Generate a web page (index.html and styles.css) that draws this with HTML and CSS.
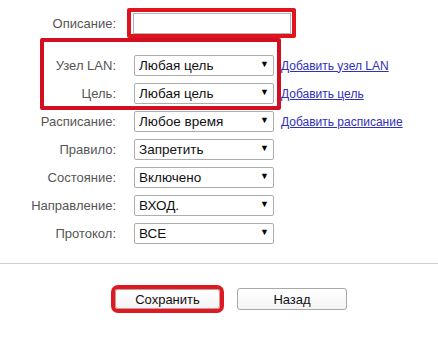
FILE: index.html
```html
<!DOCTYPE html>
<html lang="ru">
<head>
  <meta charset="UTF-8">
  <title>Правило доступа</title>
  <link rel="stylesheet" href="styles.css">
</head>
<body>
  <div class="page">
    <form class="rule-form">
      <div class="row row-desc">
        <label class="row-label" for="desc">Описание:</label>
        <input class="text-input" id="desc" type="text">
      </div>

      <div class="row">
        <label class="row-label">Узел LAN:</label>
        <span class="select-wrap"><select class="select"><option>Любая цель</option></select></span>
        <a class="row-link" href="#">Добавить узел LAN</a>
      </div>
      <div class="row">
        <label class="row-label">Цель:</label>
        <span class="select-wrap"><select class="select"><option>Любая цель</option></select></span>
        <a class="row-link" href="#">Добавить цель</a>
      </div>
      <div class="row">
        <label class="row-label">Расписание:</label>
        <span class="select-wrap"><select class="select"><option>Любое время</option></select></span>
        <a class="row-link" href="#">Добавить расписание</a>
      </div>
      <div class="row">
        <label class="row-label">Правило:</label>
        <span class="select-wrap"><select class="select"><option>Запретить</option></select></span>
      </div>
      <div class="row">
        <label class="row-label">Состояние:</label>
        <span class="select-wrap"><select class="select"><option>Включено</option></select></span>
      </div>
      <div class="row">
        <label class="row-label">Направление:</label>
        <span class="select-wrap"><select class="select"><option>ВХОД.</option></select></span>
      </div>
      <div class="row">
        <label class="row-label">Протокол:</label>
        <span class="select-wrap"><select class="select"><option>ВСЕ</option></select></span>
      </div>

      <div class="divider"></div>

      <div class="actions">
        <button type="button" class="btn btn-save">Сохранить</button>
        <button type="button" class="btn btn-back">Назад</button>
      </div>
    </form>

    <!-- annotation frames drawn over the form -->
    <div class="mark mark-desc"></div>
    <div class="mark mark-targets"></div>
  </div>
</body>
</html>
```

FILE: styles.css
```css
body {
  margin: 0;
  padding: 0;
  background: #fff;
  font-family: 'Liberation Sans', Arial, sans-serif;
}
.page {
  position: relative;
  width: 438px;
  height: 337px;
  overflow: hidden;
}
.rule-form {
  padding-top: 13px;
}
.row {
  display: flex;
  align-items: center;
  height: 21px;
  margin-bottom: 7px;
}
.row-desc {
  margin-bottom: 21px;
}
.row-label {
  width: 116px;
  text-align: right;
  font-size: 13px;
  color: #555;
}
.text-input {
  margin-left: 17px;
  width: 158px;
  height: 21px;
  box-sizing: border-box;
  border: 1px solid #b5b5b5;
  padding: 0 4px;
  font: inherit;
}
.select-wrap {
  position: relative;
  margin-left: 18px;
  width: 140px;
  height: 21px;
}
.select {
  appearance: none;
  -webkit-appearance: none;
  width: 100%;
  height: 21px;
  box-sizing: border-box;
  border: 1px solid #adadad;
  border-radius: 2px;
  background: #fff;
  padding: 0 0 0 4px;
  font-family: inherit;
  font-size: 13.5px;
  color: #111;
}
.select-wrap::after {
  content: '\25BC';
  position: absolute;
  right: 5px;
  top: 5px;
  font-size: 9px;
  line-height: 1;
  color: #000;
  pointer-events: none;
}
.row-link {
  margin-left: 7px;
  font-size: 12px;
  color: #3030b8;
  text-decoration: underline;
}
.divider {
  margin-top: 19px;
  height: 1px;
  background: #d0d0d0;
}
.actions {
  display: flex;
  align-items: center;
  padding-left: 115px;
  margin-top: 24px;
}
.btn {
  font-family: inherit;
  font-size: 13px;
  color: #111;
  background: linear-gradient(#fff, #f4f4f4);
  border: 1px solid #a8a8a8;
  border-radius: 3px;
  box-sizing: border-box;
  padding: 0;
}
.btn-save {
  width: 105px;
  height: 20px;
  outline: 4px solid #dd1a22;
  outline-offset: 0;
  border-color: #c99;
}
.btn-back {
  width: 110px;
  height: 22px;
  margin-left: 17px;
}
.mark {
  position: absolute;
  box-sizing: border-box;
  border: 4px solid #e0141c;
  border-radius: 2px;
}
.mark-desc {
  left: 127px;
  top: 8px;
  width: 169px;
  height: 30px;
}
.mark-targets {
  left: 40px;
  top: 38px;
  width: 241px;
  height: 72px;
  border-color: #d20f22;
}
```
